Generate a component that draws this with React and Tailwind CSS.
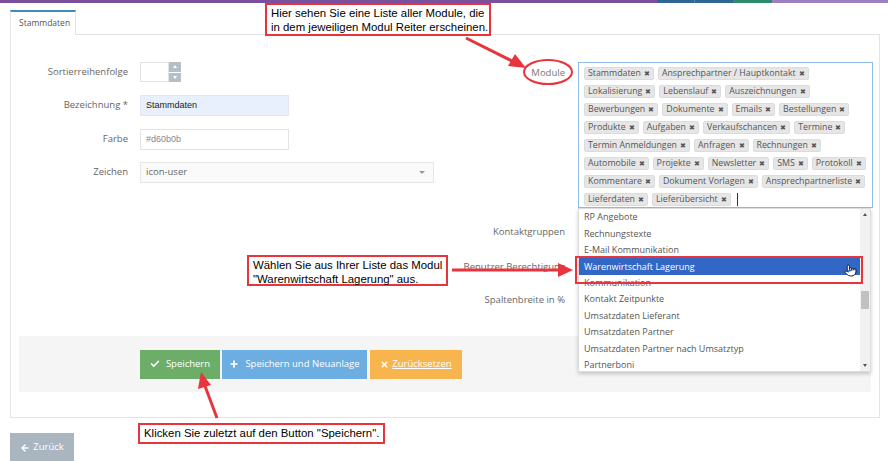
import React from 'react';
import { Check, Plus, X, ArrowLeft, Pointer } from 'lucide-react';

const modules = [
  'Stammdaten', 'Ansprechpartner / Hauptkontakt', 'Lokalisierung', 'Lebenslauf', 'Auszeichnungen',
  'Bewerbungen', 'Dokumente', 'Emails', 'Bestellungen', 'Produkte', 'Aufgaben', 'Verkaufschancen',
  'Termine', 'Termin Anmeldungen', 'Anfragen', 'Rechnungen', 'Automobile', 'Projekte', 'Newsletter',
  'SMS', 'Protokoll', 'Kommentare', 'Dokument Vorlagen', 'Ansprechpartnerliste', 'Lieferdaten',
  'Lieferübersicht',
];

const options = [
  'RP Angebote', 'Rechnungstexte', 'E-Mail Kommunikation', 'Warenwirtschaft Lagerung', 'Kommunikation',
  'Kontakt Zeitpunkte', 'Umsatzdaten Lieferant', 'Umsatzdaten Partner', 'Umsatzdaten Partner nach Umsatztyp',
  'Partnerboni',
];

const Label = ({ children }) => (
  <div className="w-[129px] shrink-0 text-right text-[9.5px] text-[#666] pr-[12px] whitespace-nowrap">{children}</div>
);

const RightLabel = ({ children }) => (
  <div className="w-[139px] shrink-0 text-right pr-[13px] text-[9.5px] text-[#666] whitespace-nowrap">{children}</div>
);

const Callout = ({ className, children }) => (
  <div
    className={`absolute bg-white border-2 border-[#e8353d] px-[4px] text-[11.4px] leading-[14px] text-black whitespace-nowrap ${className}`}
    style={{ fontFamily: '"Liberation Sans", Arial, sans-serif' }}
  >
    {children}
  </div>
);

export default function App() {
  return (
    <div
      className="relative w-[888px] h-[461px] overflow-hidden bg-white"
      style={{ fontFamily: '"Open Sans", sans-serif' }}
    >
      {/* top strip */}
      <div className="flex h-[3px]">
        <div className="w-[657px] bg-[#7a4f9c]" />
        <div className="w-[38px] bg-[#2f6794] border-r border-[#5c86aa]" />
        <div className="w-[38px] bg-[#2f6794]" />
        <div className="w-[39px] bg-[#2e8a6c]" />
        <div className="flex-1 bg-[#9d80c4]" />
      </div>

      <div className="ml-[10px] mr-[8px]">
        {/* tab row */}
        <div className="flex mt-[7px] h-[25px]">
          <div className="w-[66px] border-t-2 border-t-[#3c8dbc] border-x border-x-[#e3e3e3] bg-white flex items-center pl-[8px] text-[8.5px] text-[#555]">
            Stammdaten
          </div>
          <div className="flex-1 border-b border-[#e3e3e3]" />
        </div>

        {/* panel */}
        <div className="border-x border-b border-[#e3e3e3] pt-[27px] pb-[25px]">
          <div className="flex">
            {/* left column */}
            <div className="w-[428px] shrink-0">
              <div className="flex items-center h-[20px]">
                <Label>Sortierreihenfolge</Label>
                <div className="flex h-[20px]">
                  <div className="w-[29px] border border-[#e3e3e3] bg-white" />
                  <div className="w-[12px] flex flex-col gap-px">
                    <div className="flex-1 bg-[#b3c0c9] flex items-center justify-center">
                      <div className="w-0 h-0 border-x-[2px] border-x-transparent border-b-[3px] border-b-white" />
                    </div>
                    <div className="flex-1 bg-[#b3c0c9] flex items-center justify-center">
                      <div className="w-0 h-0 border-x-[2px] border-x-transparent border-t-[3px] border-t-white" />
                    </div>
                  </div>
                </div>
              </div>
              <div className="flex items-center h-[21px] mt-[13px]">
                <Label>Bezeichnung *</Label>
                <div className="w-[149px] h-[21px] bg-[#e8f0fe] border border-[#e3e8f0] flex items-center px-[5px] text-[9px] text-[#222]" style={{ fontFamily: '"Liberation Sans", Arial, sans-serif' }}>
                  Stammdaten
                </div>
              </div>
              <div className="flex items-center h-[21px] mt-[13px]">
                <Label>Farbe</Label>
                <div className="w-[149px] h-[21px] bg-white border border-[#e3e3e3] flex items-center px-[5px] text-[9px] text-[#888]" style={{ fontFamily: '"Liberation Sans", Arial, sans-serif' }}>
                  #d60b0b
                </div>
              </div>
              <div className="flex items-center h-[21px] mt-[12px]">
                <Label>Zeichen</Label>
                <div className="w-[294px] h-[21px] bg-[#fafafa] border border-[#e6e6e6] flex items-center justify-between px-[5px] text-[9.5px] text-[#666]">
                  <span>icon-user</span>
                  <div className="w-0 h-0 mr-[3px] border-x-[3px] border-x-transparent border-t-[3px] border-t-[#999]" />
                </div>
              </div>
            </div>

            {/* right column */}
            <div className="flex-1">
              <div className="flex">
                <div className="w-[139px] shrink-0 text-right pr-[13px] pt-[4px] text-[9.5px] text-[#777]">Module</div>
                <div className="relative w-[295px]">
                  <div className="h-[146px] border border-[#8fbbe8] bg-white pl-[5px] pr-[3px] pt-[4px] flex flex-wrap content-start gap-x-[4px] gap-y-[5px]">
                    {modules.map((m) => (
                      <div key={m} className="h-[13px] flex items-center gap-[3px] px-[3px] bg-[#e6e6e6] border border-[#dcdcdc] rounded-[2px] text-[8.8px] leading-none text-[#555]">
                        <span>{m}</span>
                        <span className="text-[7px] text-[#555]">✖</span>
                      </div>
                    ))}
                    <div className="h-[13px] w-px bg-[#333] ml-[2px]" />
                  </div>

                  {/* dropdown overlay */}
                  <div className="absolute left-0 top-[146px] w-[293px] h-[164px] bg-white border border-[#ddd] shadow-[0_2px_4px_rgba(0,0,0,0.2)] flex z-10">
                    <div className="flex-1">
                      {options.map((o, i) => (
                        <div
                          key={o}
                          className={`h-[16.4px] flex items-center pl-[5px] text-[9px] ${i === 3 ? 'bg-[#3367c6] text-white' : 'text-[#555]'}`}
                        >
                          {o}
                          {i === 3 && (
                            <Pointer size={13} className="ml-auto mr-[3px] mt-[8px] fill-white text-black" strokeWidth={1.5} />
                          )}
                        </div>
                      ))}
                    </div>
                    <div className="w-[10px] bg-[#f1f1f1] flex flex-col items-center py-[4px]">
                      <div className="w-0 h-0 border-x-[2px] border-x-transparent border-b-[3px] border-b-[#555]" />
                      <div className="w-[8px] h-[18px] bg-[#c1c1c1] mt-[75px]" />
                      <div className="flex-1" />
                      <div className="w-0 h-0 border-x-[2px] border-x-transparent border-t-[3px] border-t-[#555]" />
                    </div>
                  </div>
                </div>
              </div>
              <div className="flex items-center h-[20px] mt-[14px]">
                <RightLabel>Kontaktgruppen</RightLabel>
              </div>
              <div className="flex items-center h-[20px] mt-[15px]">
                <RightLabel>Benutzer Berechtigung</RightLabel>
              </div>
              <div className="flex items-center h-[20px] mt-[13px]">
                <RightLabel>Spaltenbreite in %</RightLabel>
              </div>
            </div>
          </div>

          {/* button bar */}
          <div className="mt-[26px] mx-[8px] h-[56px] bg-[#f5f5f5] flex items-center pl-[121px] gap-[2px]">
            <div className="h-[29px] w-[80px] bg-[#6cae68] flex items-center justify-center gap-[6px] text-[9.5px] text-white">
              <Check size={10} strokeWidth={4} />
              <span>Speichern</span>
            </div>
            <div className="h-[29px] w-[145px] bg-[#6caee2] flex items-center justify-center gap-[6px] text-[9.5px] text-white">
              <Plus size={10} strokeWidth={4} />
              <span>Speichern und Neuanlage</span>
            </div>
            <div className="h-[29px] w-[92px] ml-[1px] bg-[#f8b54e] flex items-center justify-center gap-[3px] text-[9.5px] text-white">
              <X size={9} strokeWidth={4} />
              <span className="underline">Zurücksetzen</span>
            </div>
          </div>
        </div>

        {/* back button */}
        <div className="mt-[15px] h-[29px] w-[64px] bg-[#a9b6c0] flex items-center justify-center gap-[3px] text-[9.5px] text-white">
          <ArrowLeft size={10} strokeWidth={3.5} />
          <span>Zurück</span>
        </div>
      </div>

      {/* annotations */}
      <Callout className="left-[265px] top-[3px] w-[226px] h-[33px] pt-[1px]">
        Hier sehen Sie eine Liste aller Module, die<br />in dem jeweiligen Modul Reiter erscheinen.
      </Callout>
      <Callout className="left-[247px] top-[255px] w-[201px] h-[31px] pt-[1px]">
        Wählen Sie aus Ihrer Liste das Modul<br />"Warenwirtschaft Lagerung" aus.
      </Callout>
      <Callout className="left-[138px] top-[423px] w-[247px] h-[21px] pt-[1px]">
        Klicken Sie zuletzt auf den Button "Speichern".
      </Callout>
      <div className="absolute left-[575px] top-[256px] w-[288px] h-[28px] border-2 border-[#e8353d] z-20" />

      <svg className="absolute inset-0 pointer-events-none z-30" width="888" height="461" viewBox="0 0 888 461">
        <ellipse cx="548" cy="72" rx="24" ry="12" fill="none" stroke="#e8353d" strokeWidth="2" />
        <line x1="466" y1="38" x2="514" y2="62" stroke="#e8353d" strokeWidth="3" />
        <polygon points="526,68 508,66 515,54" fill="#e8353d" />
        <line x1="452" y1="270" x2="560" y2="270" stroke="#e8353d" strokeWidth="3" />
        <polygon points="573,270 558,263 558,277" fill="#e8353d" />
        <line x1="217" y1="418" x2="205" y2="386" stroke="#e8353d" strokeWidth="3" />
        <polygon points="201,372 198,389 211,385" fill="#e8353d" />
      </svg>
    </div>
  );
}
